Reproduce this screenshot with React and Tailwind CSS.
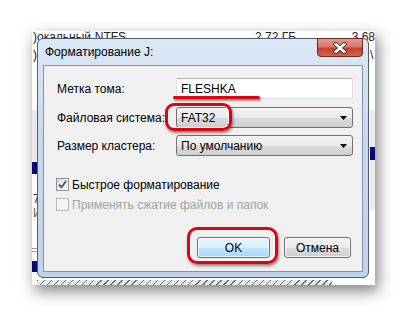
import React from 'react';

const font = "font-['Liberation_Sans','Noto_Sans',Arial,sans-serif]";

function Combo({ value }) {
  return (
    <div className="w-[177px] h-[21px] flex items-center justify-between pl-[4px] pr-[5px] rounded-[3px] border border-[#707070] bg-[linear-gradient(to_bottom,#f3f3f3_0%,#ebebeb_50%,#dddddd_51%,#cfcfcf_100%)] text-[12px] text-black">
      <span>{value}</span>
      <svg width="7" height="4" viewBox="0 0 7 4">
        <path d="M0 0 H7 L3.5 4 Z" fill="#000" />
      </svg>
    </div>
  );
}

function CheckBox({ checked, disabled, label }) {
  return (
    <div className="flex items-center h-[13px] -ml-px">
      <div
        className={
          disabled
            ? 'w-[13px] h-[13px] border border-[#b8b8b8] bg-[#f4f4f4]'
            : 'w-[13px] h-[13px] border border-[#8e8f8f] bg-[linear-gradient(135deg,#dcdcdc,#fdfdfd)] flex items-center justify-center'
        }
      >
        {checked && (
          <svg width="11" height="11" viewBox="0 0 11 11">
            <path d="M2 5.5 L4.5 8.2 L9.2 2" fill="none" stroke="#3d5a98" strokeWidth="1.9" />
          </svg>
        )}
      </div>
      <span className={disabled ? 'ml-[3px] text-[12px] text-[#a3a3a3]' : 'ml-[3px] text-[12px] text-black'}>
        {label}
      </span>
    </div>
  );
}

function CloseButton() {
  return (
    <div className="shrink-0 w-[46px] h-[19px] -mt-px mr-[5px] flex items-center justify-center rounded-b-[4px] border border-[#6b2a22] bg-red-600 bg-[linear-gradient(to_bottom,#e09a8e,#d57b6c_45%,#c3412f_55%,#d2634f)]">
      <svg width="16" height="12" viewBox="0 0 16 12">
        <path d="M3.5 2 L12.5 10 M12.5 2 L3.5 10" stroke="#3a2a28" strokeWidth="4.2" strokeLinecap="round" />
        <path d="M3.5 2 L12.5 10 M12.5 2 L3.5 10" stroke="#ffffff" strokeWidth="2.4" strokeLinecap="round" />
      </svg>
    </div>
  );
}

export default function App() {
  return (
    <div className={`relative w-[408px] h-[317px] bg-white overflow-hidden pl-[32px] pt-[31px] ${font}`}>
      {/* screenshot with its drop shadow */}
      <div className="relative w-[343px] h-[254px] bg-white overflow-hidden shadow-[3px_6px_14px_rgba(0,0,0,0.5)]">
        {/* fragments of the explorer window behind the dialog */}
        <div className="flex flex-col h-full text-[12px] text-[#222]">
          <div className="flex h-[14px] leading-[14px] -mt-px whitespace-nowrap">
            <span className="w-[63px] pl-[1px]">)окальный</span>
            <span className="w-[161px]">NTFS</span>
            <span className="w-[97px]">2,72 ГБ</span>
            <span>3,68</span>
          </div>
          <div className="flex justify-between flex-1">
            <div className="w-[5px] flex flex-col">
              <span className="mt-[4px] pl-[1px] leading-[14px]">)</span>
              <div className="mt-[48px] h-[50px] bg-[#e9e9e9]" />
              <div className="mt-[2px] h-[12px] bg-[#0a0a6e]" />
              <span className="mt-[18px] pl-[1px] leading-[14px] text-[#6b1a10]">7</span>
              <span className="pl-[1px] leading-[14px] text-[#8a5a10]">И</span>
              <div className="mt-[28px] h-px bg-[#9a9a9a]" />
              <div className="mt-[2px] h-px bg-[#9a9a9a]" />
              <div className="mt-[9px] h-[11px] bg-[#0a0a6e]" />
            </div>
            <div className="w-[5px] flex flex-col">
              <span className="mt-[4px] leading-[14px]">\</span>
              <div className="mt-[48px] h-[37px] bg-[#ececec]" />
              <div className="h-[13px] bg-[#0a0a6e]" />
              <div className="h-[50px] bg-[#ececec]" />
            </div>
          </div>
          <div className="ml-[5px] w-[295px] h-[5px] bg-[repeating-linear-gradient(135deg,#6e6e6e_0px,#6e6e6e_1px,#e8e8e8_1px,#e8e8e8_5px)]" />
        </div>

        {/* format dialog, lying over the explorer window */}
        <div className="absolute left-[5px] top-[7px] w-[332px] h-[240px] flex flex-col rounded-[6px] border border-[#4e5e72] bg-[#c8daee] bg-[linear-gradient(to_bottom,#dbe7f4,#c8daee_40%,#bfd3ea)]">
          <div className="h-[26px] flex items-start">
            <span className="flex-1 mt-[6px] pl-[7px] text-[12px] leading-[14px] text-black">Форматирование J:</span>
            <CloseButton />
          </div>

          <div className="flex-1 mx-[5px] mb-[5px] border border-[#7f93ab] bg-[#f0f0f0] pl-[13px] pr-[9px] pt-[12px] flex flex-col text-[12px] text-black">
            <div className="flex items-center justify-between h-[21px]">
              <span>Метка тома:</span>
              <div className="w-[177px] h-[21px] flex items-center pl-[4px] bg-white border border-[#dbdfe6] border-t-[#abadb3] rounded-[2px]">
                FLESHKA
              </div>
            </div>
            <div className="flex items-center justify-between h-[21px] mt-[8px]">
              <span>Файловая система:</span>
              <Combo value="FAT32" />
            </div>
            <div className="flex items-center justify-between h-[21px] mt-[7px]">
              <span>Размер кластера:</span>
              <Combo value="По умолчанию" />
            </div>

            <div className="mt-[22px]">
              <CheckBox checked label="Быстрое форматирование" />
            </div>
            <div className="mt-[7px]">
              <CheckBox disabled label="Применять сжатие файлов и папок" />
            </div>

            <div className="mt-[26px] flex justify-end gap-[14px] mr-[2px]">
              <button className="w-[73px] h-[21px] rounded-[3px] border border-[#3c7fb1] bg-[linear-gradient(to_bottom,#eaf6fd_0%,#d9f0fc_50%,#bee6fd_51%,#a7d9f5_100%)] shadow-[inset_0_0_0_1px_rgba(255,255,255,0.7)] text-[12px] text-black">
                OK
              </button>
              <button className="w-[67px] h-[21px] rounded-[3px] border border-[#707070] bg-[linear-gradient(to_bottom,#f2f2f2_0%,#ebebeb_50%,#dddddd_51%,#cfcfcf_100%)] shadow-[inset_0_0_0_1px_rgba(255,255,255,0.7)] text-[12px] text-black">
                Отмена
              </button>
            </div>
          </div>
        </div>
      </div>

      {/* red annotations drawn over the screenshot */}
      <div className="absolute left-[173px] top-[96px] w-[87px] h-[3px] rounded-full bg-[#e3000f] shadow-[1px_2px_2px_rgba(0,0,0,0.4)]" />
      <div className="absolute left-[165px] top-[103px] w-[67px] h-[28px] rounded-[9px] border-[3px] border-[#e3000f] shadow-[1px_2px_3px_rgba(0,0,0,0.45),inset_0_0_0_1px_rgba(255,255,255,0.85)]" />
      <div className="absolute left-[187px] top-[227px] w-[91px] h-[37px] rounded-[10px] border-[3px] border-[#e3000f] shadow-[1px_2px_3px_rgba(0,0,0,0.45),inset_0_0_0_1px_rgba(255,255,255,0.85)]" />
    </div>
  );
}
